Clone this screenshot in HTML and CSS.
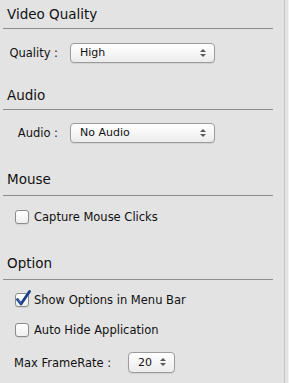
FILE: index.html
```html
<!DOCTYPE html>
<html lang="en">
<head>
  <meta charset="UTF-8" />
  <title>Preferences</title>
  <link rel="stylesheet" href="styles.css">
</head>
<body>
  <div class="panel">

    <section class="group">
      <h2 class="group-title">Video Quality</h2>
      <div class="group-body body-video">
        <div class="field">
          <span class="field-label">Quality :</span>
          <div class="popup">High<span class="arrows"><i class="up"></i><i class="down"></i></span></div>
        </div>
      </div>
    </section>

    <section class="group">
      <h2 class="group-title">Audio</h2>
      <div class="group-body body-audio">
        <div class="field">
          <span class="field-label">Audio :</span>
          <div class="popup">No Audio<span class="arrows"><i class="up"></i><i class="down"></i></span></div>
        </div>
      </div>
    </section>

    <section class="group">
      <h2 class="group-title title-loose">Mouse</h2>
      <div class="group-body body-mouse">
        <label class="check-row"><span class="box"></span>Capture Mouse Clicks</label>
      </div>
    </section>

    <section class="group">
      <h2 class="group-title title-loose">Option</h2>
      <div class="group-body body-option">
        <label class="check-row">
          <span class="box checked">
            <svg class="tick" width="16" height="17" viewBox="0 0 16 17">
              <path d="M2.5 9.5 L6 14 L14.5 1.5" fill="none" stroke="#1d3f86" stroke-width="2.8" stroke-linecap="round" stroke-linejoin="round"/>
              <path d="M3 9.8 L6 13.4" fill="none" stroke="#4c78c8" stroke-width="1" stroke-linecap="round"/>
            </svg>
          </span>Show Options in Menu Bar
        </label>
        <label class="check-row"><span class="box"></span>Auto Hide Application</label>
        <div class="rate-row">
          <span class="rate-label">Max FrameRate :</span>
          <div class="popup popup-small">20<span class="arrows"><i class="up"></i><i class="down"></i></span></div>
        </div>
      </div>
    </section>

  </div>
</body>
</html>
```

FILE: styles.css
```css
* {
  box-sizing: border-box;
}

html, body {
  margin: 0;
  padding: 0;
  height: 100%;
}

body {
  font-family: "DejaVu Sans", "Liberation Sans", sans-serif;
  background: #e3e3e3;
  color: #111;
}

.panel {
  width: 289px;
  height: 383px;
  padding-left: 3px;
  border-right: 1px solid #f2f2f2;
  box-shadow: inset -3px 0 0 #e3e3e3, inset -4px 0 0 #c4c4c4;
  overflow: hidden;
}

.group {
  width: 270px;
}

.group-title {
  margin: 0;
  padding: 5px 0 5px 4px;
  font-size: 13.5px;
  font-weight: normal;
  line-height: 18px;
  border-bottom: 1px solid #8e8e8e;
}

.group-title.title-loose {
  padding: 3px 0 7px 4px;
}

.group-body {
  font-size: 11.5px;
}

.body-video { padding: 14px 0 18px; }
.body-audio { padding: 13px 0 24px; }
.body-mouse { padding: 14px 0 27px; }
.body-option { padding: 13px 0 0; }

.field {
  display: flex;
  align-items: center;
  gap: 12px;
}

.field-label {
  width: 55px;
  text-align: right;
}

.popup {
  position: relative;
  width: 145px;
  height: 20px;
  padding-left: 9px;
  line-height: 18px;
  font-size: 11px;
  border: 1px solid #9c9c9c;
  border-radius: 4px;
  background: linear-gradient(#ffffff, #f4f4f4 60%, #ececec);
  box-shadow: 0 1px 1px rgba(0,0,0,0.08);
}

.arrows {
  position: absolute;
  right: 8px;
  top: 5px;
  display: flex;
  flex-direction: column;
  gap: 2px;
}

.arrows i {
  display: block;
  width: 0;
  height: 0;
  border-left: 3px solid transparent;
  border-right: 3px solid transparent;
}

.arrows .up { border-bottom: 3px solid #5a5a5a; }
.arrows .down { border-top: 3px solid #5a5a5a; }

.check-row {
  display: flex;
  align-items: center;
  gap: 5px;
  height: 14px;
  padding-left: 12px;
}

.body-option .check-row + .check-row {
  margin-top: 16px;
}

.box {
  position: relative;
  width: 14px;
  height: 14px;
  border: 1px solid #8b8b8b;
  border-radius: 3px;
  background: linear-gradient(#ffffff, #efefef);
  box-shadow: 0 1px 1px rgba(0,0,0,0.08);
}

.tick {
  position: absolute;
  left: -1px;
  top: -4px;
}

.rate-row {
  display: flex;
  align-items: center;
  margin-top: 15px;
  padding-left: 11px;
}

.rate-label {
  width: 114px;
}

.popup-small {
  width: 47px;
  height: 21px;
  line-height: 19px;
}
```
